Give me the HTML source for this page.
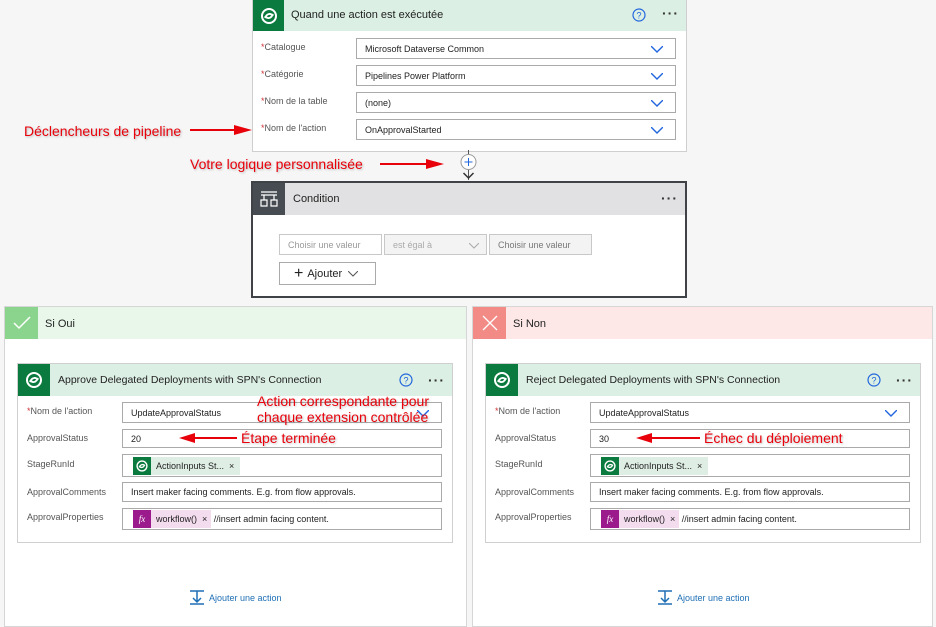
<!DOCTYPE html>
<html><head><meta charset="utf-8"><style>
*{box-sizing:border-box;margin:0;padding:0}
body{width:936px;height:627px;background:#f6f6f6;font-family:"Liberation Sans",sans-serif;position:relative;overflow:hidden;color:#222}
.a{position:absolute}
.card{position:absolute;background:#fff;border:1px solid #cfcfcf}
.hdr{position:absolute;left:0;top:0;right:0}
.ib{position:absolute;left:0;top:0;display:flex;align-items:center;justify-content:center}
.t{position:absolute;font-size:11px;color:#222;white-space:nowrap}
.dots{position:absolute;font-size:14px;letter-spacing:1px;font-weight:bold;color:#333;line-height:6px}
.lbl{position:absolute;font-size:9px;color:#555;white-space:nowrap}
.lbl b{color:#d13438;font-weight:normal}
.in{position:absolute;background:#fff;border:1px solid #aaa;font-size:9px;color:#222;padding-left:8px;display:flex;align-items:center;white-space:nowrap}
.chev{position:absolute;right:12px;top:4px}
.red{position:absolute;color:#e8000a;font-size:14px;white-space:nowrap;text-shadow:1px 1px 2px rgba(0,0,0,.25)}
.tok{display:inline-flex;align-items:center;height:18px;font-size:9px;margin-left:2px}
.tok i{display:inline-flex;width:18px;height:18px;align-items:center;justify-content:center;font-style:normal;color:#fff}
</style></head><body>

<svg width="0" height="0" style="position:absolute"><defs>
<g id="dv"><circle cx="10" cy="10" r="7" fill="none" stroke="#fff" stroke-width="2"/><path d="M6 12c2-5 6-5 8-2M14 8c-2 5-6 5-8 2" fill="none" stroke="#fff" stroke-width="1.8"/></g>
<path id="ch" d="M0 0l6 6 6-6" fill="none" stroke="#2266dd" stroke-width="1.4"/>
</defs></svg>

<div class="card" style="left:252px;top:-1px;width:435px;height:153px">
 <div class="hdr" style="height:31px;background:#dcefe4"></div>
 <div class="ib" style="width:31px;height:31px;background:#0b7a3e"><svg width="20" height="20"><use href="#dv"/></svg></div>
 <div class="t" style="left:38px;top:9px">Quand une action est exécutée</div>
 <svg class="a" style="left:379px;top:8px" width="14" height="14"><circle cx="7" cy="7" r="6" fill="none" stroke="#2266dd" stroke-width="1.2"/><text x="7" y="10.5" font-size="9" fill="#2266dd" text-anchor="middle" font-family="Liberation Sans">?</text></svg>
 <div class="dots" style="left:409px;top:10px">···</div>
 <div class="lbl" style="left:8px;top:42px"><b>*</b>Catalogue</div>
 <div class="lbl" style="left:8px;top:69px"><b>*</b>Catégorie</div>
 <div class="lbl" style="left:8px;top:96px"><b>*</b>Nom de la table</div>
 <div class="lbl" style="left:8px;top:123px"><b>*</b>Nom de l'action</div>
 <div class="in" style="left:103px;top:38px;width:320px;height:21px">Microsoft Dataverse Common<svg class="chev" width="12" height="8" style="top:7px"><use href="#ch"/></svg></div>
 <div class="in" style="left:103px;top:65px;width:320px;height:21px">Pipelines Power Platform<svg class="chev" width="12" height="8" style="top:7px"><use href="#ch"/></svg></div>
 <div class="in" style="left:103px;top:92px;width:320px;height:21px">(none)<svg class="chev" width="12" height="8" style="top:7px"><use href="#ch"/></svg></div>
 <div class="in" style="left:103px;top:119px;width:320px;height:21px">OnApprovalStarted<svg class="chev" width="12" height="8" style="top:7px"><use href="#ch"/></svg></div>
</div>

<svg class="a" style="left:455px;top:150px" width="28" height="32"><line x1="13.5" y1="0" x2="13.5" y2="30" stroke="#555" stroke-width="1"/><circle cx="13.5" cy="12" r="7.5" fill="#fff" stroke="#999"/><path d="M13.5 8v8M9.5 12h8" stroke="#2266dd" stroke-width="1"/><path d="M8.5 23l5 5 5-5" fill="none" stroke="#333" stroke-width="1.5"/></svg>

<div class="card" style="left:251px;top:181px;width:436px;height:117px;border:2px solid #3f4247">
 <div class="hdr" style="height:32px;background:#e1e1e3"></div>
 <div class="ib" style="width:32px;height:32px;background:#474c53"><svg width="18" height="16"><path d="M1 1h16M1 4h16M4 4v5M14 4v5M1 9h6v6H1zM11 9h6v6h-6z" fill="none" stroke="#fff" stroke-width="1.2"/></svg></div>
 <div class="t" style="left:40px;top:10px">Condition</div>
 <div class="dots" style="left:408px;top:12px">···</div>
 <div class="in" style="left:26px;top:51px;width:103px;height:21px;color:#999;border-color:#c8c8c8">Choisir une valeur</div>
 <div class="in" style="left:131px;top:51px;width:103px;height:21px;color:#aaa;background:#f3f3f3;border-color:#c8c8c8">est égal à<svg class="a" style="left:84px;top:8px" width="10" height="6"><path d="M0 0l5 5 5-5" fill="none" stroke="#aaa"/></svg></div>
 <div class="in" style="left:236px;top:51px;width:103px;height:21px;color:#777;background:#f3f3f3;border-color:#c8c8c8">Choisir une valeur</div>
 <div class="in" style="left:26px;top:79px;width:97px;height:23px;font-size:11px;padding-left:14px"><span style="font-size:16px;margin-right:4px">+</span>Ajouter<svg style="margin-left:6px" width="10" height="6"><path d="M0 0l5 5 5-5" fill="none" stroke="#555"/></svg></div>
</div>

<div class="card" style="left:4px;top:306px;width:463px;height:321px;border-color:#d6d6d6">
 <div class="hdr" style="height:32px;background:#e9f7ea"></div>
 <div class="ib" style="width:33px;height:32px;background:#8ad48d"><svg width="18" height="14"><path d="M1 7l5 5L17 1" fill="none" stroke="#fff" stroke-width="1.5"/></svg></div>
 <div class="t" style="left:40px;top:11px">Si Oui</div>
 <div class="card" style="left:12px;top:56px;width:436px;height:180px">
  <div class="hdr" style="height:32px;background:#dcefe4"></div>
  <div class="ib" style="width:32px;height:32px;background:#0b7a3e"><svg width="20" height="20"><use href="#dv"/></svg></div>
  <div class="t" style="left:40px;top:10px;font-size:10.5px">Approve Delegated Deployments with SPN's Connection</div>
  <svg class="a" style="left:381px;top:9px" width="14" height="14"><circle cx="7" cy="7" r="6" fill="none" stroke="#2266dd" stroke-width="1.2"/><text x="7" y="10.5" font-size="9" fill="#2266dd" text-anchor="middle" font-family="Liberation Sans">?</text></svg>
  <div class="dots" style="left:410px;top:13px">···</div>
 </div>
</div>
<div class="lbl" style="left:27px;top:406px"><b>*</b>Nom de l'action</div>
<div class="lbl" style="left:27px;top:433px">ApprovalStatus</div>
<div class="lbl" style="left:27px;top:459px">StageRunId</div>
<div class="lbl" style="left:27px;top:487px">ApprovalComments</div>
<div class="lbl" style="left:27px;top:512px">ApprovalProperties</div>
<div class="in" style="left:122px;top:402px;width:320px;height:21px">UpdateApprovalStatus<svg class="chev" width="12" height="8" style="top:7px"><use href="#ch"/></svg></div>
<div class="in" style="left:122px;top:429px;width:320px;height:19px">20</div>
<div class="in" style="left:122px;top:454px;width:320px;height:23px;padding-left:8px"><span class="tok" style="background:#dfeee5;padding-right:6px"><i style="background:#0b7a3e"><svg width="14" height="14" viewBox="0 0 20 20"><use href="#dv"/></svg></i>&nbsp;&nbsp;ActionInputs St... &nbsp;×</span></div>
<div class="in" style="left:122px;top:482px;width:320px;height:20px">Insert maker facing comments. E.g. from flow approvals.</div>
<div class="in" style="left:122px;top:508px;width:320px;height:22px;padding-left:8px"><span class="tok" style="background:#f4dcef;padding-right:4px"><i style="background:#9b1a8c;font-family:'Liberation Serif';font-style:italic">fx</i>&nbsp;&nbsp;workflow() &nbsp;×</span>&nbsp;//insert admin facing content.</div>
<svg class="a" style="left:189px;top:590px" width="16" height="16"><path d="M1 1h14M8 1v11M4 8l4 4 4-4M1 14h14" fill="none" stroke="#1f6fb5" stroke-width="1.5"/></svg>
<div class="a" style="left:209px;top:593px;font-size:9px;color:#1f6fb5">Ajouter une action</div>

<div class="card" style="left:472px;top:306px;width:461px;height:321px;border-color:#d6d6d6">
 <div class="hdr" style="height:32px;background:#fde7e7"></div>
 <div class="ib" style="width:33px;height:32px;background:#f28b86"><svg width="16" height="16"><path d="M1 1l14 14M15 1L1 15" stroke="#fff" stroke-width="1.3"/></svg></div>
 <div class="t" style="left:40px;top:11px">Si Non</div>
 <div class="card" style="left:12px;top:56px;width:436px;height:180px">
  <div class="hdr" style="height:32px;background:#dcefe4"></div>
  <div class="ib" style="width:32px;height:32px;background:#0b7a3e"><svg width="20" height="20"><use href="#dv"/></svg></div>
  <div class="t" style="left:40px;top:10px;font-size:10.5px">Reject Delegated Deployments with SPN's Connection</div>
  <svg class="a" style="left:381px;top:9px" width="14" height="14"><circle cx="7" cy="7" r="6" fill="none" stroke="#2266dd" stroke-width="1.2"/><text x="7" y="10.5" font-size="9" fill="#2266dd" text-anchor="middle" font-family="Liberation Sans">?</text></svg>
  <div class="dots" style="left:410px;top:13px">···</div>
 </div>
</div>
<div class="lbl" style="left:495px;top:406px"><b>*</b>Nom de l'action</div>
<div class="lbl" style="left:495px;top:433px">ApprovalStatus</div>
<div class="lbl" style="left:495px;top:459px">StageRunId</div>
<div class="lbl" style="left:495px;top:487px">ApprovalComments</div>
<div class="lbl" style="left:495px;top:512px">ApprovalProperties</div>
<div class="in" style="left:590px;top:402px;width:320px;height:21px">UpdateApprovalStatus<svg class="chev" width="12" height="8" style="top:7px"><use href="#ch"/></svg></div>
<div class="in" style="left:590px;top:429px;width:320px;height:19px">30</div>
<div class="in" style="left:590px;top:454px;width:320px;height:23px;padding-left:8px"><span class="tok" style="background:#dfeee5;padding-right:6px"><i style="background:#0b7a3e"><svg width="14" height="14" viewBox="0 0 20 20"><use href="#dv"/></svg></i>&nbsp;&nbsp;ActionInputs St... &nbsp;×</span></div>
<div class="in" style="left:590px;top:482px;width:320px;height:20px">Insert maker facing comments. E.g. from flow approvals.</div>
<div class="in" style="left:590px;top:508px;width:320px;height:22px;padding-left:8px"><span class="tok" style="background:#f4dcef;padding-right:4px"><i style="background:#9b1a8c;font-family:'Liberation Serif';font-style:italic">fx</i>&nbsp;&nbsp;workflow() &nbsp;×</span>&nbsp;//insert admin facing content.</div>
<svg class="a" style="left:657px;top:590px" width="16" height="16"><path d="M1 1h14M8 1v11M4 8l4 4 4-4M1 14h14" fill="none" stroke="#1f6fb5" stroke-width="1.5"/></svg>
<div class="a" style="left:677px;top:593px;font-size:9px;color:#1f6fb5">Ajouter une action</div>

<div class="red" style="left:24px;top:123px">Déclencheurs de pipeline</div>
<svg class="a" style="left:190px;top:123px" width="64" height="14"><path d="M0 7h48" stroke="#e8000a" stroke-width="2"/><path d="M44 2l18 5-18 5z" fill="#e8000a"/></svg>
<div class="red" style="left:190px;top:156px">Votre logique personnalisée</div>
<svg class="a" style="left:380px;top:157px" width="66" height="14"><path d="M0 7h50" stroke="#e8000a" stroke-width="2"/><path d="M46 2l18 5-18 5z" fill="#e8000a"/></svg>
<div class="red" style="left:257px;top:393px;line-height:16px">Action correspondante pour<br>chaque extension contrôlée</div>
<div class="red" style="left:241px;top:430px">Étape terminée</div>
<svg class="a" style="left:179px;top:431px" width="58" height="14"><path d="M12 7h46" stroke="#e8000a" stroke-width="2"/><path d="M16 2L0 7l16 5z" fill="#e8000a"/></svg>
<div class="red" style="left:704px;top:430px">Échec du déploiement</div>
<svg class="a" style="left:636px;top:431px" width="64" height="14"><path d="M12 7h52" stroke="#e8000a" stroke-width="2"/><path d="M16 2L0 7l16 5z" fill="#e8000a"/></svg>
</body></html>
